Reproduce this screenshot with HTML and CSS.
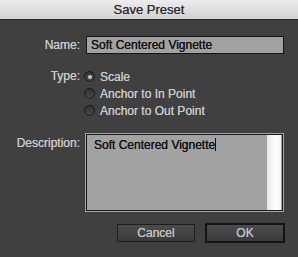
FILE: index.html
```html
<!DOCTYPE html>
<html>
<head>
    <title>Save Preset</title>
    <link rel="stylesheet" href="styles.css">
</head>
<body>
    <div class="dialog">
        <div class="titlebar">Save Preset</div>

        <div class="form-row name-row">
            <label class="label">Name:</label>
            <div class="field">Soft Centered Vignette</div>
        </div>

        <div class="form-row type-row">
            <label class="label">Type:</label>
            <div class="options">
                <div class="option"><span class="radio checked"></span>Scale</div>
                <div class="option"><span class="radio"></span>Anchor to In Point</div>
                <div class="option"><span class="radio"></span>Anchor to Out Point</div>
            </div>
        </div>

        <div class="form-row desc-row">
            <label class="label">Description:</label>
            <div class="textarea">
                <div class="text">Soft Centered Vignette<span class="caret"></span></div>
                <div class="scrollbar"></div>
            </div>
        </div>

        <div class="button-group">
            <button class="btn">Cancel</button>
            <button class="btn default">OK</button>
        </div>
    </div>
</body>
</html>
```

FILE: styles.css
```css
body {
    margin: 0;
    font-family: "Liberation Sans", Arial, sans-serif;
    font-size: 12px;
    background: #404040;
}
.dialog {
    width: 298px;
    height: 257px;
    background: #404040;
    color: #cacaca;
    overflow: hidden;
}
.titlebar {
    height: 19px;
    line-height: 19px;
    text-align: center;
    font-size: 13px;
    color: #2a2a2a;
    background: linear-gradient(#ececec, #d2d2d2);
    border-bottom: 1px solid #2c2c2c;
    text-shadow: 0 0 0.5px #555;
}
.form-row {
    display: flex;
    align-items: flex-start;
}
.label {
    width: 80px;
    text-align: right;
    margin-right: 6px;
    flex: none;
    text-shadow: 0 0 0.5px #cacaca;
}
.name-row {
    margin-top: 16px;
}
.name-row .label {
    line-height: 18px;
}
.field {
    box-sizing: border-box;
    width: 198px;
    height: 18px;
    line-height: 16px;
    padding-left: 4px;
    background: #a2a2a2;
    border: 1px solid #151515;
    color: #111;
    text-shadow: 0 0 0.4px #111;
}
.type-row {
    margin-top: 14px;
}
.type-row .label {
    line-height: 17px;
    margin-right: 4px;
}
.options {
    display: flex;
    flex-direction: column;
    text-shadow: 0 0 0.5px #cacaca;
}
.option {
    display: flex;
    align-items: center;
    height: 17px;
}
.radio {
    box-sizing: border-box;
    width: 11px;
    height: 11px;
    border-radius: 50%;
    border: 1px solid #161616;
    background: linear-gradient(#333, #474747);
    box-shadow: 0 1px 0 #4c4c4c;
    margin-right: 5px;
    position: relative;
}
.radio.checked::after {
    content: "";
    position: absolute;
    left: 2.5px;
    top: 2.5px;
    width: 4px;
    height: 4px;
    border-radius: 50%;
    background: #c4c4c4;
}
.desc-row {
    margin-top: 14px;
}
.desc-row .label {
    margin-top: 3px;
    margin-right: 5px;
}
.textarea {
    box-sizing: border-box;
    width: 199px;
    height: 79px;
    border: 1px solid #e3a300;
    box-shadow: inset 0 0 0 1px #1a1a1a;
    background: #a2a2a2;
    display: flex;
    padding: 1px;
}
.text {
    flex: 1;
    color: #111;
    padding: 3px 0 0 7px;
    text-shadow: 0 0 0.4px #111;
}
.caret {
    display: inline-block;
    width: 1px;
    height: 13px;
    background: #111;
    vertical-align: -2px;
}
.scrollbar {
    width: 14px;
    margin-right: 1px;
    background: linear-gradient(to right, #e6e6e6, #fff 60%, #f2f2f2);
}
.button-group {
    display: flex;
    justify-content: flex-end;
    align-items: center;
    gap: 10px;
    margin-top: 11px;
    padding-right: 13px;
}
.btn {
    box-sizing: border-box;
    font-family: "Liberation Sans", Arial, sans-serif;
    font-size: 12px;
    color: #c4c4c4;
    text-shadow: 0 0 0.5px #c4c4c4;
    background: linear-gradient(#4c4c4c, #3a3a3a);
    border: 1px solid #1e1e1e;
    width: 78px;
    height: 18px;
    padding: 0;
}
.btn.default {
    width: 80px;
    height: 20px;
    border: 2px solid #141414;
}
```
